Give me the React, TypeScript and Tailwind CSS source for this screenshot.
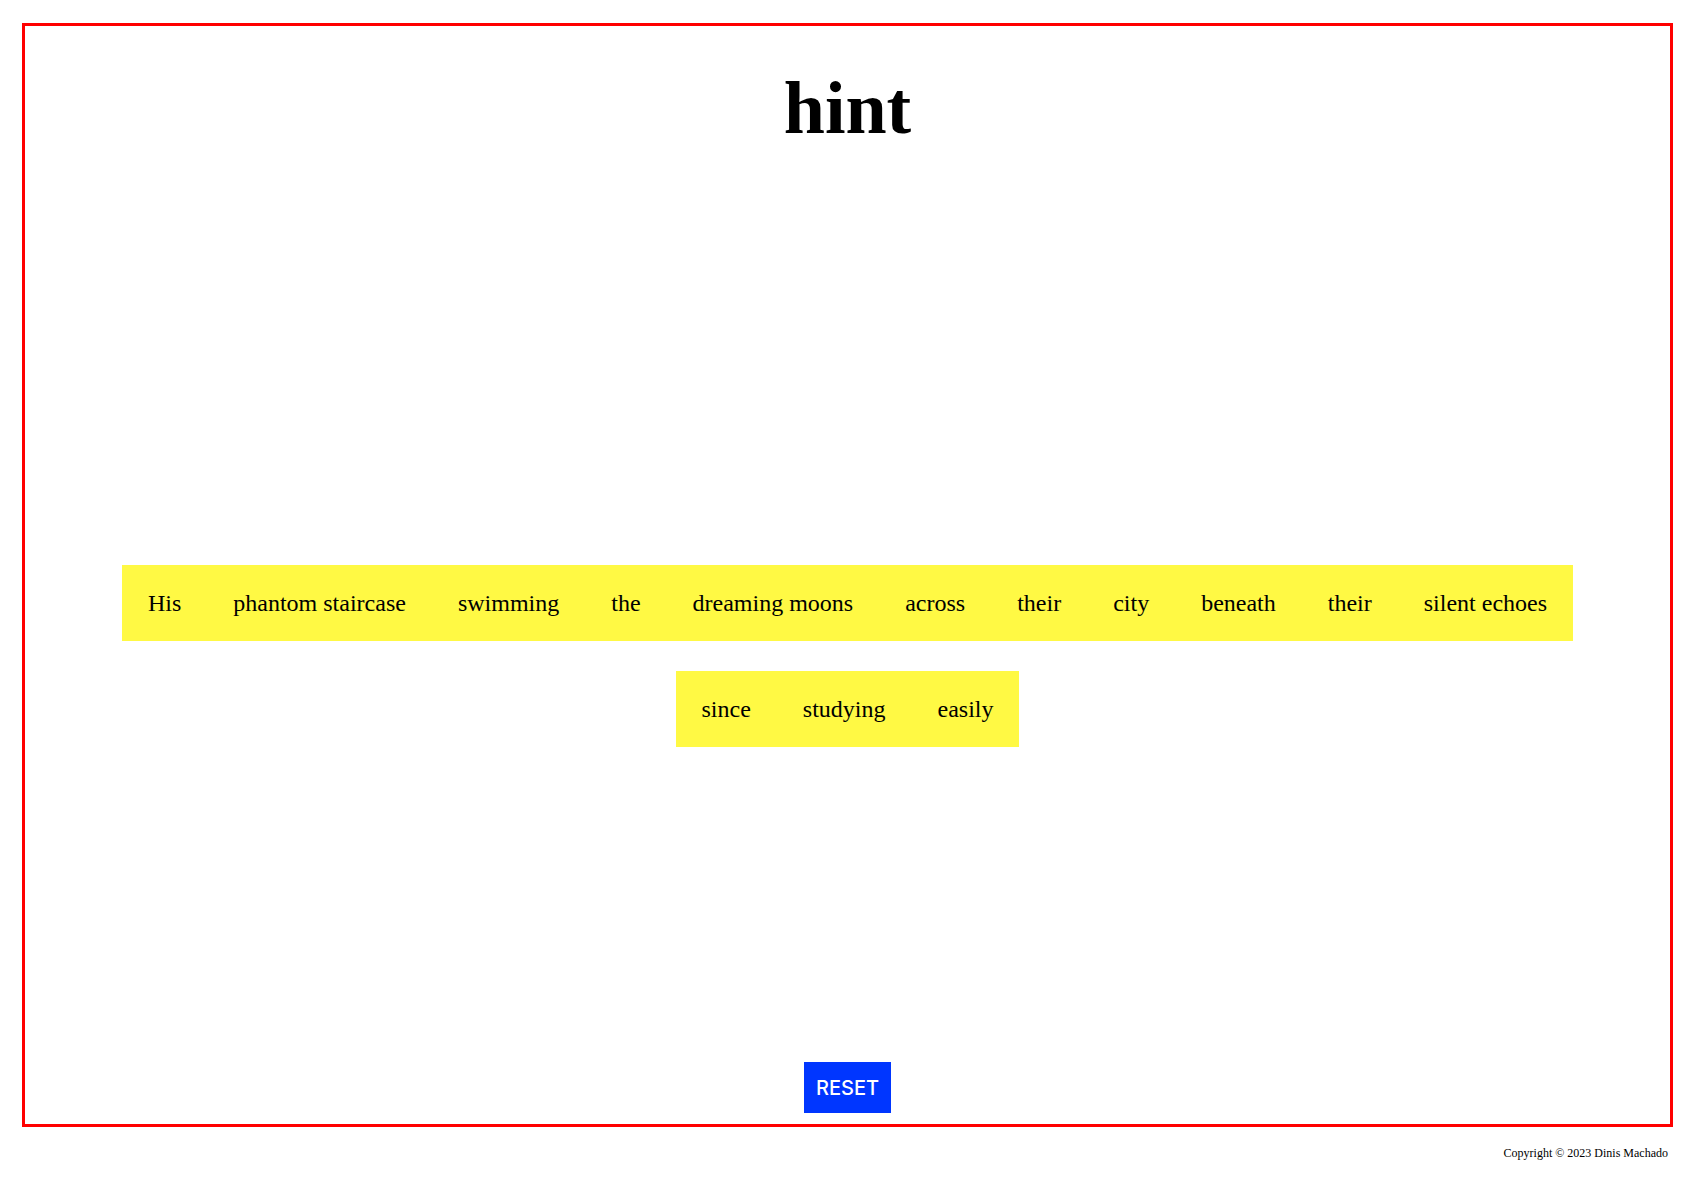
import React from "react";

const row1 = [
  "His",
  "phantom staircase",
  "swimming",
  "the",
  "dreaming moons",
  "across",
  "their",
  "city",
  "beneath",
  "their",
  "silent echoes",
];
const row2 = ["since", "studying", "easily"];

function Word({ text }: { text: string }) {
  return (
    <div className="bg-[#fff944] px-[26px] py-[24px] text-[24px] leading-[28px] text-black whitespace-nowrap">
      {text}
    </div>
  );
}

export default function App() {
  return (
    <div className="bg-white min-h-[1191px] w-[1692px] pt-[23px] font-['Liberation_Serif',serif]">
      <div className="ml-[22px] w-[1651px] h-[1104px] border-[3px] border-[#ff0000] flex flex-col items-center pb-[11px]">
        <h1 className="mt-[45px] text-[74px] leading-[74px] font-bold text-black">hint</h1>
        <div className="mt-[420px] flex justify-center">
          {row1.map((w, i) => (
            <Word key={i} text={w} />
          ))}
        </div>
        <div className="mt-[30px] flex justify-center">
          {row2.map((w, i) => (
            <Word key={i} text={w} />
          ))}
        </div>
        <button className="mt-auto w-[87px] h-[51px] bg-[#0036ff] text-white text-[20px] font-medium font-['Inter',sans-serif] flex items-center justify-center">
          RESET
        </button>
      </div>
      <div className="ml-[22px] w-[1651px] pr-[5px] mt-[19px] text-right text-[12px] leading-[14px] text-black">
        Copyright © 2023 Dinis Machado
      </div>
    </div>
  );
}
